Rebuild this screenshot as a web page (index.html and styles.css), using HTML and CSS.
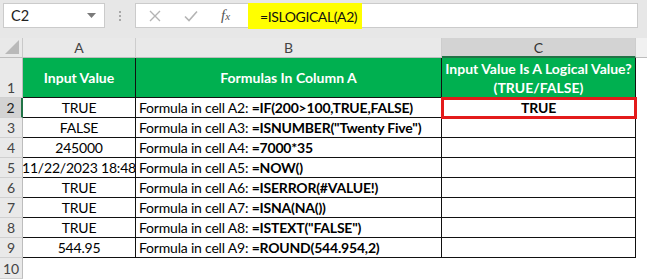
FILE: index.html
```html
<!DOCTYPE html>
<html>
<head>
<meta charset="utf-8">
<link rel="stylesheet" href="styles.css">
</head>
<body>
<div class="app">
  <div class="toolbar">
    <div class="namebox">
      <span class="ref">C2</span>
      <svg class="dd" width="9" height="5" viewBox="0 0 9 5"><path d="M0 0H9L4.5 5Z" fill="#7a7a7a"/></svg>
    </div>
    <div class="grip"><i></i><i></i><i></i></div>
    <div class="fbar">
      <div class="ficons">
        <svg class="ic" width="12" height="12" viewBox="0 0 12 12"><path d="M1 1L11 11M11 1L1 11" stroke="#b4b4b4" stroke-width="1.4" fill="none"/></svg>
        <svg class="ic" width="14" height="12" viewBox="0 0 14 12"><path d="M1 6.5L5 10.5L13 1.5" stroke="#b4b4b4" stroke-width="1.6" fill="none"/></svg>
        <span class="fx">f<span class="x">x</span></span>
      </div>
      <div class="formula"><span class="hl">=ISLOGICAL(A2)</span></div>
    </div>
  </div>
  <div class="sheet">
    <div class="corner"><svg width="14" height="14" viewBox="0 0 14 14"><path d="M14 0V14H0Z" fill="#b9b9b9"/></svg></div>
    <div class="colh">A</div>
    <div class="colh">B</div>
    <div class="colh sel">C</div>
    <div class="colh rest"></div>

    <div class="rowh">1</div>
    <div class="hd"><span>Input Value</span></div>
    <div class="hd"><span>Formulas In Column A</span></div>
    <div class="hd"><span>Input Value Is A Logical Value?<br>(TRUE/FALSE)</span></div>
    <div class="blank"></div>

    <div class="rowh sel">2</div>
    <div class="c ctr"><span>TRUE</span></div>
    <div class="c"><span>Formula in cell A2: <b>=IF(200&gt;100,TRUE,FALSE)</b></span></div>
    <div class="c ctr res"><span><b>TRUE</b></span></div>
    <div class="blank"></div>

    <div class="rowh">3</div>
    <div class="c ctr"><span>FALSE</span></div>
    <div class="c"><span>Formula in cell A3: <b>=ISNUMBER("Twenty Five")</b></span></div>
    <div class="c"></div>
    <div class="blank"></div>

    <div class="rowh">4</div>
    <div class="c ctr"><span>245000</span></div>
    <div class="c"><span>Formula in cell A4: <b>=7000*35</b></span></div>
    <div class="c"></div>
    <div class="blank"></div>

    <div class="rowh">5</div>
    <div class="c ctr"><span>11/22/2023 18:48</span></div>
    <div class="c"><span>Formula in cell A5: <b>=NOW()</b></span></div>
    <div class="c"></div>
    <div class="blank"></div>

    <div class="rowh">6</div>
    <div class="c ctr"><span>TRUE</span></div>
    <div class="c"><span>Formula in cell A6: <b>=ISERROR(#VALUE!)</b></span></div>
    <div class="c"></div>
    <div class="blank"></div>

    <div class="rowh">7</div>
    <div class="c ctr"><span>TRUE</span></div>
    <div class="c"><span>Formula in cell A7: <b>=ISNA(NA())</b></span></div>
    <div class="c"></div>
    <div class="blank"></div>

    <div class="rowh">8</div>
    <div class="c ctr"><span>TRUE</span></div>
    <div class="c"><span>Formula in cell A8: <b>=ISTEXT("FALSE")</b></span></div>
    <div class="c"></div>
    <div class="blank"></div>

    <div class="rowh">9</div>
    <div class="c ctr"><span>544.95</span></div>
    <div class="c"><span>Formula in cell A9: <b>=ROUND(544.954,2)</b></span></div>
    <div class="c"></div>
    <div class="blank"></div>

    <div class="rowh">10</div>
    <div class="blank"></div>
    <div class="blank"></div>
    <div class="blank"></div>
    <div class="blank"></div>
  </div>
</div>
</body>
</html>
```

FILE: styles.css
```css
* { box-sizing: border-box; }
html, body { margin: 0; padding: 0; }
body {
  width: 647px;
  height: 279px;
  overflow: hidden;
  background: #ffffff;
  font-family: Lato, "Liberation Sans", sans-serif;
  font-size: 14px;
  color: #000;
}
.app { display: flex; flex-direction: column; }

.toolbar {
  height: 38px;
  background: #e7e7e7;
  display: flex;
  align-items: flex-start;
  padding: 3px 9px 0 3px;
}
.namebox {
  width: 102px;
  height: 25px;
  background: #fff;
  border: 1px solid #cbcbcb;
  display: flex;
  align-items: center;
  justify-content: space-between;
  padding: 0 8px 0 7px;
}
.ref { font-size: 14.5px; color: #222; }
.grip {
  width: 30px;
  height: 25px;
  display: flex;
  flex-direction: column;
  align-items: center;
  justify-content: center;
  gap: 2px;
}
.grip i { width: 2px; height: 2px; background: #a8a8a8; display: block; }
.fbar {
  flex: 1;
  height: 25px;
  background: #fff;
  border: 1px solid #cbcbcb;
  display: flex;
  align-items: stretch;
}
.ficons {
  width: 112px;
  display: flex;
  align-items: center;
  padding-left: 13px;
  gap: 23px;
}
.fx {
  font-family: "Liberation Serif", serif;
  font-style: italic;
  font-size: 15px;
  color: #555;
}
.fx .x { font-size: 11px; }
.formula { flex: 1; display: flex; margin-top: -1px; margin-bottom: -2px; }
.hl {
  background: #ffff00;
  padding: 0 5px 0 12px;
  display: flex;
  align-items: center;
  font-size: 14px;
  letter-spacing: -0.4px;
  color: #111;
}

.sheet {
  display: grid;
  grid-template-columns: 23px 113px 306px 194px 11px;
  grid-template-rows: 20px 40px repeat(8, 20px) 21px;
  letter-spacing: -0.2px;
}
.corner {
  background: #e9e9e9;
  border-right: 1px solid #c9c9c9;
  border-bottom: 1px solid #bdbdbd;
  display: flex;
  align-items: flex-end;
  justify-content: flex-end;
  padding: 0 3px 3px 0;
}
.corner svg { display: block; }
.colh {
  background: #e9e9e9;
  border-right: 1px solid #cdcdcd;
  border-bottom: 1px solid #bdbdbd;
  color: #444;
  font-size: 14px;
  letter-spacing: 0;
  display: flex;
  align-items: center;
  justify-content: center;
}
.colh.sel { background: #d3d3d3; border-bottom: 2px solid #217346; color: #333; }
.colh.rest { border-right: none; background: #f1f1f1; }
.rowh {
  background: #e9e9e9;
  border-right: 1px solid #bdbdbd;
  border-bottom: 1px solid #d0d0d0;
  color: #444;
  font-size: 14px;
  letter-spacing: 0;
  display: flex;
  align-items: flex-end;
  justify-content: center;
  line-height: 19px;
}
.rowh.sel { background: #d3d3d3; border-right: 2px solid #217346; color: #222; }
.hd {
  background: #00b050;
  color: #fff;
  font-weight: bold;
  letter-spacing: 0;
  border-right: 1px solid #111;
  border-bottom: 1px solid #111;
  display: flex;
  align-items: center;
  justify-content: center;
  text-align: center;
  white-space: nowrap;
  line-height: 19px;
}
.c {
  border-right: 1px solid #111;
  border-bottom: 1px solid #111;
  display: flex;
  align-items: center;
  padding-left: 3px;
  white-space: nowrap;
  overflow: hidden;
  line-height: 19px;
}
.c.ctr { justify-content: center; padding-left: 0; }
.res {
  position: relative;
  z-index: 2;
  outline: 3px solid #e31b1b;
  outline-offset: -2px;
}
.blank { background: #fff; }
```
